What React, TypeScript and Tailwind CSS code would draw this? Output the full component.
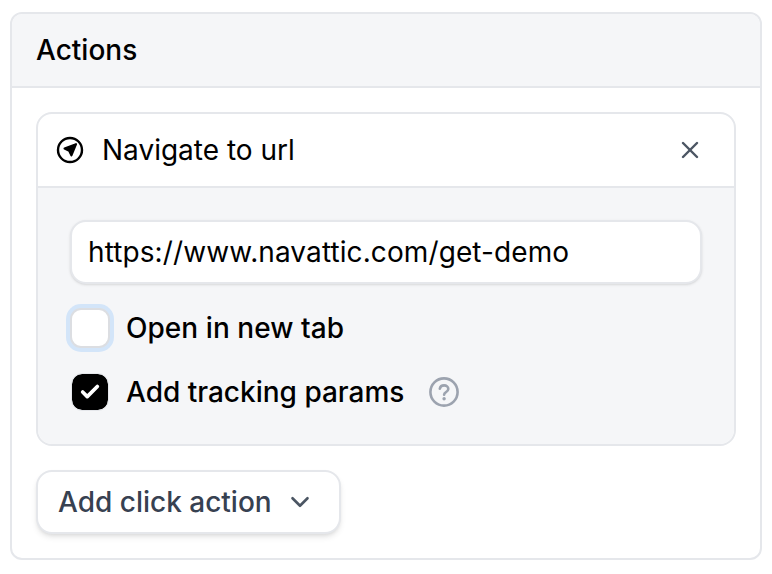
import { Check, ChevronDown, X } from "lucide-react";

export default function App() {
  return (
    <div className="w-[772px] h-[574px] bg-white pt-3 px-2.5 font-['Inter',sans-serif] text-black">
      <div className="w-[752px] h-[548px] rounded-[12px] border-2 border-[#e5e7eb] overflow-hidden flex flex-col">
        <div className="h-[74px] shrink-0 bg-[#f3f4f6]/80 border-b-2 border-[#e5e7eb] flex items-center pl-6 text-[28px] font-medium">
          Actions
        </div>
        <div className="flex-1 px-6 pt-6">
          <div className="w-[700px] h-[334px] rounded-[16px] border-2 border-[#e5e7eb] overflow-hidden flex flex-col">
            <div className="h-[74px] shrink-0 border-b-2 border-[#e5e7eb] flex items-center pl-[17px] pr-[30px]">
              <svg width="30" height="30" viewBox="0 0 30 30" fill="none" className="shrink-0">
                <circle cx="15" cy="15" r="12" stroke="black" strokeWidth="2.4" />
                <path d="M21 9.2 L9.6 13.6 L14.2 15.8 L16.4 20.4 Z" fill="black" stroke="black" strokeWidth="2.2" strokeLinejoin="round" />
              </svg>
              <span className="ml-[17px] text-[28px] flex-1">Navigate to url</span>
              <X size={28} color="#4b5563" strokeWidth={2.1} />
            </div>
            <div className="flex-1 bg-[#f3f4f6]/80 pl-8 pr-8 pt-8">
              <div className="h-[64px] rounded-[16px] border-2 border-[#e5e7eb] bg-white shadow-sm flex items-center pl-4 text-[28px] tracking-[0.1px]">
                https://www.navattic.com/get-demo
              </div>
              <div className="flex items-center mt-3 h-[64px]">
                <div className="w-[40px] h-[40px] rounded-[11px] bg-white border-2 border-[#dcdee2] ring-[4px] ring-[#d3e5f9] shrink-0" />
                <span className="ml-4 text-[28px] font-medium tracking-[0.05px]">Open in new tab</span>
              </div>
              <div className="flex items-center h-[64px]">
                <div className="w-[36px] h-[36px] ml-0.5 rounded-[10px] bg-black outline-1 outline-[#e5e7eb] flex items-center justify-center shrink-0">
                  <Check size={22} color="white" strokeWidth={4} />
                </div>
                <span className="ml-[18px] text-[28px] font-medium">Add tracking params</span>
                <svg width="32" height="32" viewBox="0 0 32 32" fill="none" className="ml-[24px]">
                  <circle cx="16" cy="16" r="13.6" stroke="#9ca3af" strokeWidth="2.6" />
                  <path d="M11.8 12.8c.4-2.2 2.2-3.4 4.3-3.4 2.4 0 4.2 1.5 4.2 3.6 0 3-4.2 3-4.2 5.8" stroke="#9ca3af" strokeWidth="2.6" strokeLinecap="round" />
                  <circle cx="16.1" cy="22.8" r="1.7" fill="#9ca3af" />
                </svg>
              </div>
            </div>
          </div>
          <div className="mt-6 w-[305px] h-[64px] rounded-[16px] border-2 border-[#e5e7eb] bg-white shadow-md flex items-center pl-5 text-[28px] font-medium text-[#374151]">
            Add click action
            <ChevronDown size={30} color="#4b5563" strokeWidth={2.1} className="ml-[13px]" />
          </div>
        </div>
      </div>
    </div>
  );
}
